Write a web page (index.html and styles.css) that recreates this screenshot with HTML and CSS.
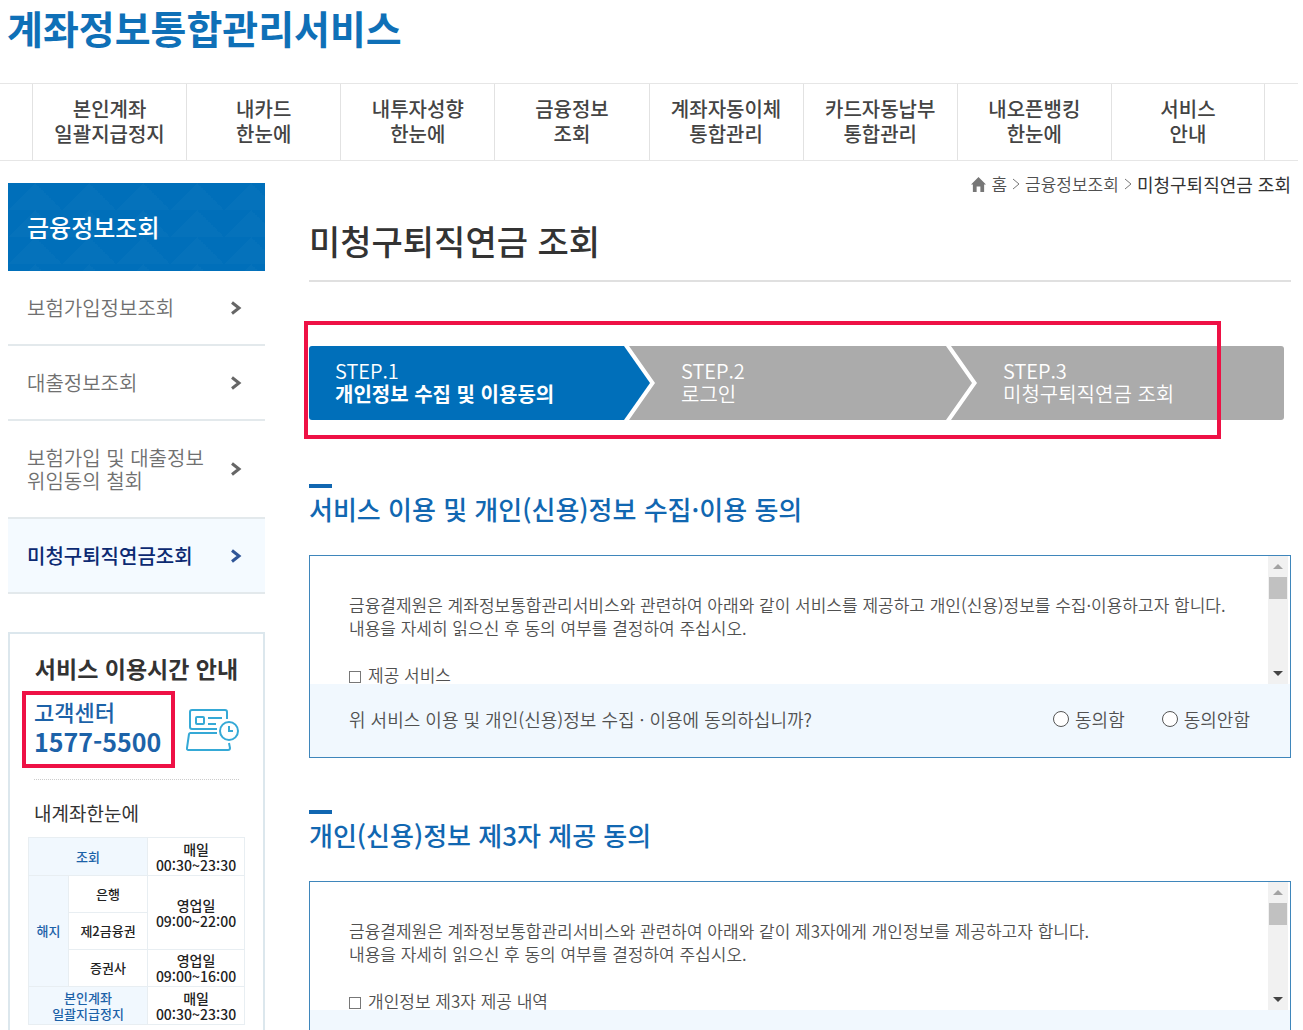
FILE: index.html
```
<!DOCTYPE html>
<html lang="ko">
  <head>
    <meta charset="UTF-8" />
    <meta name="viewport" content="width=device-width, initial-scale=1.0" />
    <title>계좌정보통합관리서비스</title>
    <link rel="stylesheet" href="styles.css">
  </head>
  <body>
    <div class="page">
      <header>
        <h1 class="logo">계좌정보통합관리서비스</h1>
        <nav class="gnb">
          <a href="#">본인계좌<br>일괄지급정지</a>
          <a href="#">내카드<br>한눈에</a>
          <a href="#">내투자성향<br>한눈에</a>
          <a href="#">금융정보<br>조회</a>
          <a href="#">계좌자동이체<br>통합관리</a>
          <a href="#">카드자동납부<br>통합관리</a>
          <a href="#">내오픈뱅킹<br>한눈에</a>
          <a href="#">서비스<br>안내</a>
        </nav>
      </header>
      <div class="container">
        <aside class="side">
          <h2 class="side-title">금융정보조회</h2>
          <nav class="lnb">
            <a href="#">보험가입정보조회
              <svg class="arrow" viewBox="0 0 12 14"><path d="M2 1.500 9 7 2 12.500" /></svg></a>
            <a href="#">대출정보조회
              <svg class="arrow" viewBox="0 0 12 14"><path d="M2 1.500 9 7 2 12.500" /></svg></a>
            <a href="#"><span>보험가입 및 대출정보<br>위임동의 철회</span>
              <svg class="arrow" viewBox="0 0 12 14"><path d="M2 1.500 9 7 2 12.500" /></svg></a>
            <a href="#" class="on">미청구퇴직연금조회
              <svg class="arrow" viewBox="0 0 12 14"><path d="M2 1.500 9 7 2 12.500" /></svg></a>
          </nav>
          <div class="info">
            <h3>서비스 이용시간 안내</h3>
            <div class="call">
              <div class="phone">
                <span>고객센터</span>
                <strong>1577-5500</strong>
              </div>
              <svg class="pc" viewBox="0 0 54 44">
                <path d="M4 19V4a2 2 0 0 1 2-2h33a2 2 0 0 1 2 2v7" />
                <path d="M4 19a2 2 0 0 0 2 2h25" />
                <rect x="10" y="9" width="8" height="7" rx="1" />
                <path d="M22 10h14M22 16h8M31 25H4.500a1.500 1.500 0 0 0-1.500 1L1 40a1.500 1.500 0 0 0 1.500 2H42a2 2 0 0 0 2-2l-1-5" />
                <circle cx="43" cy="23" r="9" />
                <path d="M43 18v5h4" />
              </svg>
            </div>
            <h4>내계좌한눈에</h4>
            <table class="time">
              <colgroup><col class="c1"><col class="c2"><col></colgroup>
              <tr><th colspan="2">조회</th><td>매일<br>00:30~23:30</td></tr>
              <tr><th rowspan="3">해지</th><td>은행</td><td rowspan="2">영업일<br>09:00~22:00</td></tr>
              <tr><td>제2금융권</td></tr>
              <tr><td>증권사</td><td>영업일<br>09:00~16:00</td></tr>
              <tr><th colspan="2">본인계좌<br>일괄지급정지</th><td>매일<br>00:30~23:30</td></tr>
            </table>
          </div>
        </aside>
        <main class="content">
          <div class="location">
            <svg class="home" viewBox="0 0 16 16"><path d="M8 0 0 8h2v8h4v-6h4v6h4V8h2z" /></svg>
            <a href="#">홈</a>
            <svg class="gt" viewBox="0 0 8 12"><path d="M1 1l6 5-6 5" /></svg>
            <a href="#">금융정보조회</a>
            <svg class="gt" viewBox="0 0 8 12"><path d="M1 1l6 5-6 5" /></svg>
            <strong>미청구퇴직연금 조회</strong>
          </div>
          <h2 class="title">미청구퇴직연금 조회</h2>
          <div class="step-wrap">
            <ol class="step">
              <li class="on">STEP.1<br><strong>개인정보 수집 및 이용동의</strong></li>
              <li>STEP.2<br>로그인</li>
              <li>STEP.3<br>미청구퇴직연금 조회</li>
            </ol>
            <div class="mark"></div>
          </div>
          <section class="agree">
            <h3>서비스 이용 및 개인(신용)정보 수집·이용 동의</h3>
            <div class="box">
              <div class="terms">
                <div class="text">
                  <p>금융결제원은 계좌정보통합관리서비스와 관련하여 아래와 같이 서비스를 제공하고 개인(신용)정보를 수집·이용하고자 합니다.<br>내용을 자세히 읽으신 후 동의 여부를 결정하여 주십시오.</p>
                  <p><i class="sq"></i>제공 서비스</p>
                </div>
                <div class="scroll">
                  <svg class="up" viewBox="0 0 10 5"><path d="M0 5l5-5 5 5z" /></svg>
                  <div class="thumb"></div>
                  <svg class="down" viewBox="0 0 10 5"><path d="M0 0l5 5 5-5z" /></svg>
                </div>
              </div>
              <div class="answer">
                <p>위 서비스 이용 및 개인(신용)정보 수집 · 이용에 동의하십니까?</p>
                <label><input type="radio" name="agree1">동의함</label>
                <label><input type="radio" name="agree1">동의안함</label>
              </div>
            </div>
          </section>
          <section class="agree">
            <h3>개인(신용)정보 제3자 제공 동의</h3>
            <div class="box">
              <div class="terms">
                <div class="text">
                  <p>금융결제원은 계좌정보통합관리서비스와 관련하여 아래와 같이 제3자에게 개인정보를 제공하고자 합니다.<br>내용을 자세히 읽으신 후 동의 여부를 결정하여 주십시오.</p>
                  <p><i class="sq"></i>개인정보 제3자 제공 내역</p>
                </div>
                <div class="scroll">
                  <svg class="up" viewBox="0 0 10 5"><path d="M0 5l5-5 5 5z" /></svg>
                  <div class="thumb"></div>
                  <svg class="down" viewBox="0 0 10 5"><path d="M0 0l5 5 5-5z" /></svg>
                </div>
              </div>
              <div class="answer"></div>
            </div>
          </section>
        </main>
      </div>
    </div>
  </body>
</html>
```
FILE: styles.css
```
* {
  box-sizing: border-box;
  margin: 0;
  padding: 0;
}
body {
  font-family: "Noto Sans CJK KR", sans-serif;
  font-size: 17px;
  color: #505050;
  background: #fff;
}
a {
  color: inherit;
  text-decoration: none;
}
.page {
  height: 100vh;
  overflow: hidden;
  padding-right: 5px;
}

/* header */
.logo {
  height: 83px;
  padding-left: 7px;
  font-size: 39px;
  line-height: 54px;
  color: #0f70b7;
}
.gnb {
  display: grid;
  grid-template-columns: repeat(8, 1fr);
  padding: 0 33px 0 32px;
  border-top: 1px solid #e6e6e6;
  border-bottom: 1px solid #e6e6e6;
}
.gnb a {
  padding: 12px 0 14px;
  border-left: 1px solid #e2e2e2;
  font-size: 20px;
  font-weight: 500;
  line-height: 25px;
  text-align: center;
  color: #444;
}
.gnb a:last-child {
  border-right: 1px solid #e2e2e2;
}
.container {
  display: flex;
  gap: 44px;
  padding: 0 7px 0 8px;
}

/* left menu */
.side {
  width: 257px;
  flex-shrink: 0;
  padding-top: 22px;
}
.side-title {
  padding: 0 19px;
  font-size: 24px;
  font-weight: 500;
  line-height: 88px;
  color: #fff;
  background-color: #006fba;
  background-image: conic-gradient(from 135deg at 50% 0, rgba(255, 255, 255, 0.02) 90deg, transparent 0);
  background-size: 54px 27px;
}
.lnb a {
  display: flex;
  justify-content: space-between;
  align-items: center;
  padding: 25px 23px 25px 19px;
  border-bottom: 2px solid #e3e9ec;
  font-size: 20px;
  font-weight: 350;
  line-height: 23px;
  color: #707070;
}
.lnb .on {
  background: #f4faff;
  font-weight: 500;
  color: #0c2a72;
}
.arrow {
  width: 12px;
  height: 14px;
  fill: none;
  stroke: #666;
  stroke-width: 3;
}
.on .arrow {
  stroke: #2f5597;
}

/* service hours */
.info {
  margin-top: 38px;
  padding: 17px 18px 40px;
  border: 2px solid #dce7ed;
}
.info h3 {
  font-size: 23px;
  line-height: 34px;
  text-align: center;
  color: #333;
}
.call {
  display: flex;
  align-items: center;
  justify-content: space-between;
  margin: 0 5px 0 -6px;
  padding: 6px 0 11px;
}
.phone {
  padding: 1px 10px 8px 8px;
  border: 4px solid #ee1145;
}
.phone span,
.phone strong {
  display: block;
  line-height: 30px;
  color: #1c62a8;
}
.phone span {
  font-size: 22px;
  font-weight: 500;
}
.phone strong {
  font-size: 25px;
}
.pc {
  width: 54px;
  height: 44px;
  fill: none;
  stroke: #35a9d6;
  stroke-width: 2;
}
.info h4 {
  margin: 0 6px;
  padding: 18px 0 9px;
  border-top: 1px dotted #ccc;
  font-size: 19px;
  font-weight: 400;
  line-height: 30px;
  color: #333;
}
.time {
  width: 100%;
  table-layout: fixed;
  border-collapse: collapse;
  font-size: 13px;
  line-height: 16px;
  text-align: center;
  color: #222;
}
.c1 {
  width: 40px;
}
.c2 {
  width: 79px;
}
.time th,
.time td {
  height: 37px;
  border: 1px solid #e8eef2;
  font-weight: 500;
}
.time tr:first-child td,
.time tr:last-child td {
  height: 38px;
}
.time th {
  background: #f1f8fe;
  color: #1c62a8;
}
.time td:last-child {
  font-size: 14px;
}
.time tr:nth-child(3) td {
  font-size: 13px;
}

/* content */
.content {
  flex: 1;
  min-width: 0;
}
.location {
  display: flex;
  justify-content: flex-end;
  align-items: center;
  gap: 5px;
  padding-top: 11px;
  line-height: 24px;
  font-weight: 350;
}
.location strong {
  font-size: 18px;
  font-weight: 400;
  color: #333;
}
.home {
  width: 15px;
  height: 15px;
  fill: #777;
}
.gt {
  width: 8px;
  height: 12px;
  fill: none;
  stroke: #777;
}
.title {
  padding: 19px 0 14px;
  border-bottom: 2px solid #e0e0e0;
  font-size: 34px;
  font-weight: 500;
  line-height: 51px;
  color: #333;
}
.step-wrap {
  position: relative;
  padding: 64px 7px 64px 0;
}
.step {
  display: grid;
  grid-template-columns: 320fr 322fr 333fr;
  border-radius: 3px;
  overflow: hidden;
  list-style: none;
}
.step li {
  margin-right: -21px;
  padding: 13px 0 15px 52px;
  background: #ababab;
  clip-path: polygon(0 0, calc(100% - 26px) 0, 100% 50%, calc(100% - 26px) 100%, 0 100%, 26px 50%);
  font-size: 20px;
  font-weight: 350;
  line-height: 23px;
  color: #fff;
}
.step .on {
  padding-left: 26px;
  background: #006fba;
  clip-path: polygon(0 0, calc(100% - 26px) 0, 100% 50%, calc(100% - 26px) 100%, 0 100%);
}
.step strong {
  font-weight: 700;
}
.step li:last-child {
  margin-right: 0;
  clip-path: polygon(0 0, 100% 0, 100% 100%, 0 100%, 26px 50%);
}
.mark {
  position: absolute;
  top: 39px;
  left: -5px;
  right: 70px;
  height: 118px;
  border: 4px solid #ee1145;
}
.agree {
  margin-bottom: 52px;
}
.agree h3 {
  padding-bottom: 26px;
  font-size: 26px;
  font-weight: 500;
  line-height: 41px;
  color: #1167b1;
}
.agree h3::before {
  content: "";
  display: block;
  width: 23px;
  height: 4px;
  background: #1167b1;
}
.box {
  border: 1px solid #3f86bb;
}
.terms {
  display: flex;
  height: 128px;
  padding-right: 2px;
}
.text {
  flex: 1;
  overflow: hidden;
  padding: 37px 0 0 39px;
  font-weight: 350;
  line-height: 23px;
  white-space: nowrap;
}
.text p {
  margin-bottom: 24px;
}
.sq {
  display: inline-block;
  width: 12px;
  height: 12px;
  margin-right: 7px;
  border: 1px solid #777;
  vertical-align: -1px;
}
.scroll {
  display: flex;
  flex-direction: column;
  align-items: center;
  width: 20px;
  padding: 8px 0;
  background: #f1f1f1;
}
.scroll svg {
  width: 10px;
  height: 5px;
}
.up {
  fill: #a3a3a3;
}
.down {
  margin-top: auto;
  fill: #444;
}
.thumb {
  width: 18px;
  height: 22px;
  margin-top: 8px;
  background: #c1c1c1;
}
.answer {
  display: flex;
  align-items: center;
  gap: 37px;
  min-height: 73px;
  padding: 0 40px 3px 39px;
  background: #f1f8fe;
  font-size: 18px;
  font-weight: 350;
}
.answer p {
  margin-right: auto;
}
.answer label {
  display: flex;
  align-items: center;
  gap: 6px;
}
.answer input {
  appearance: none;
  width: 16px;
  height: 16px;
  border: 1px solid #555;
  border-radius: 50%;
  background: #fff;
}
.answer input:checked {
  border-width: 5px;
}
```
